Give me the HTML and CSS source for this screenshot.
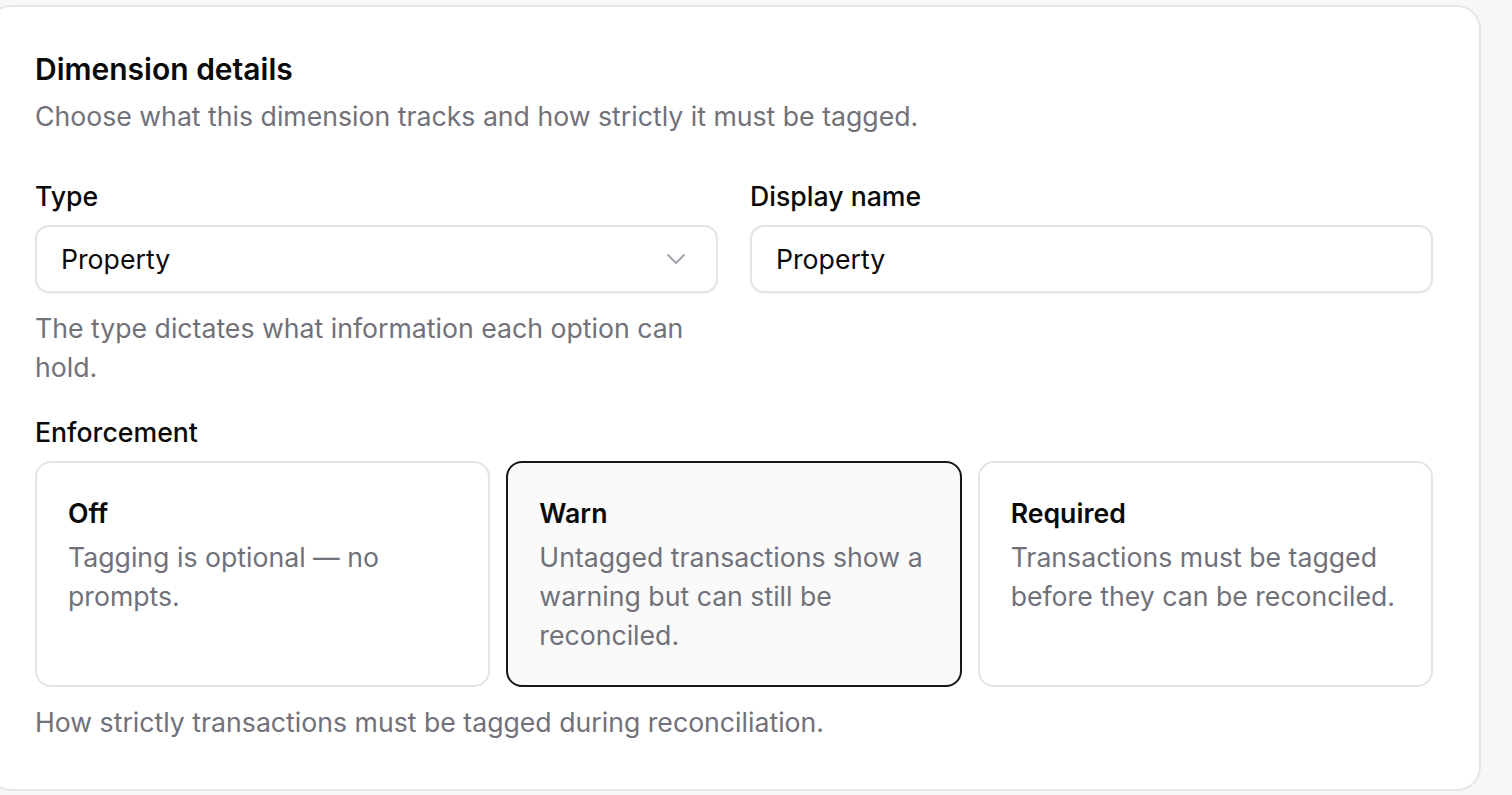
FILE: index.html
```html
<!DOCTYPE html>
<html lang="en">
<head>
<meta charset="utf-8">
<title>Dimension details</title>
<link rel="stylesheet" href="styles.css">
</head>
<body>
<div class="page">
  <section class="card">
    <h2 class="title">Dimension details</h2>
    <p class="subtitle">Choose what this dimension tracks and how strictly it must be tagged.</p>

    <div class="row">
      <div class="field">
        <label class="label">Type</label>
        <div class="control select">
          <span>Property</span>
          <svg class="chevron" width="20" height="12" viewBox="0 0 20 12" fill="none"><path d="M2 2l8 8 8-8" stroke="#a1a1aa" stroke-width="1.8" stroke-linecap="round" stroke-linejoin="round"/></svg>
        </div>
        <p class="help">The type dictates what information each option can hold.</p>
      </div>
      <div class="field">
        <label class="label">Display name</label>
        <div class="control input"><span>Property</span></div>
      </div>
    </div>

    <div class="field enforce">
      <label class="label">Enforcement</label>
      <div class="options">
        <div class="option">
          <div class="opt-title">Off</div>
          <div class="opt-desc">Tagging is optional — no prompts.</div>
        </div>
        <div class="option selected">
          <div class="opt-title">Warn</div>
          <div class="opt-desc">Untagged transactions show a warning but can still be reconciled.</div>
        </div>
        <div class="option">
          <div class="opt-title">Required</div>
          <div class="opt-desc">Transactions must be tagged before they can be reconciled.</div>
        </div>
      </div>
      <p class="help">How strictly transactions must be tagged during reconciliation.</p>
    </div>
  </section>
</div>
</body>
</html>
```
FILE: styles.css
```css
* { box-sizing: border-box; }
html, body { margin: 0; padding: 0; }
body {
  background: #f7f7f7;
  font-family: Inter, "Noto Sans", sans-serif;
  color: #0a0a0a;
  overflow: hidden;
}
.page { padding-top: 5px; }
.card {
  margin-left: -13px;
  width: 1494px;
  background: #ffffff;
  border: 2px solid #e6e6e6;
  border-radius: 24px;
  padding: 42px 46px 47px 46px;
}
.title {
  margin: 0;
  font-size: 30px;
  line-height: 40px;
  font-weight: 600;
}
.subtitle {
  margin: 8px 0 0;
  font-size: 26.67px;
  line-height: 39px;
  color: #71717a;
}
.row {
  margin-top: 41px;
  display: grid;
  grid-template-columns: 1fr 1fr;
  column-gap: 32px;
}
.field { display: flex; flex-direction: column; }
.label {
  font-size: 26.67px;
  line-height: 39px;
  font-weight: 500;
  margin-bottom: 9px;
}
.control {
  height: 68px;
  border: 2px solid #e4e4e7;
  border-radius: 14px;
  background: #fff;
  box-shadow: 0 1px 2px rgba(0,0,0,0.05);
  display: flex;
  align-items: center;
  padding: 0 24px;
  font-size: 26.67px;
}
.select { justify-content: space-between; padding-right: 30px; }
.chevron { display: block; }
.help {
  margin: 16px 0 0;
  font-size: 26.67px;
  line-height: 39px;
  color: #71717a;
}
.enforce { margin-top: 26px; }
.options {
  display: grid;
  grid-template-columns: repeat(3, 1fr);
  gap: 16px;
}
.option {
  height: 226px;
  border: 2px solid #e4e4e7;
  border-radius: 16px;
  padding: 31px 31px 20px;
  background: #fff;
}
.option.selected {
  border-color: #18181b;
  background: #fafafa;
}
.opt-title {
  font-size: 26.67px;
  line-height: 39px;
  font-weight: 600;
}
.opt-desc {
  margin-top: 5px;
  font-size: 26.67px;
  line-height: 39px;
  color: #71717a;
}
```
